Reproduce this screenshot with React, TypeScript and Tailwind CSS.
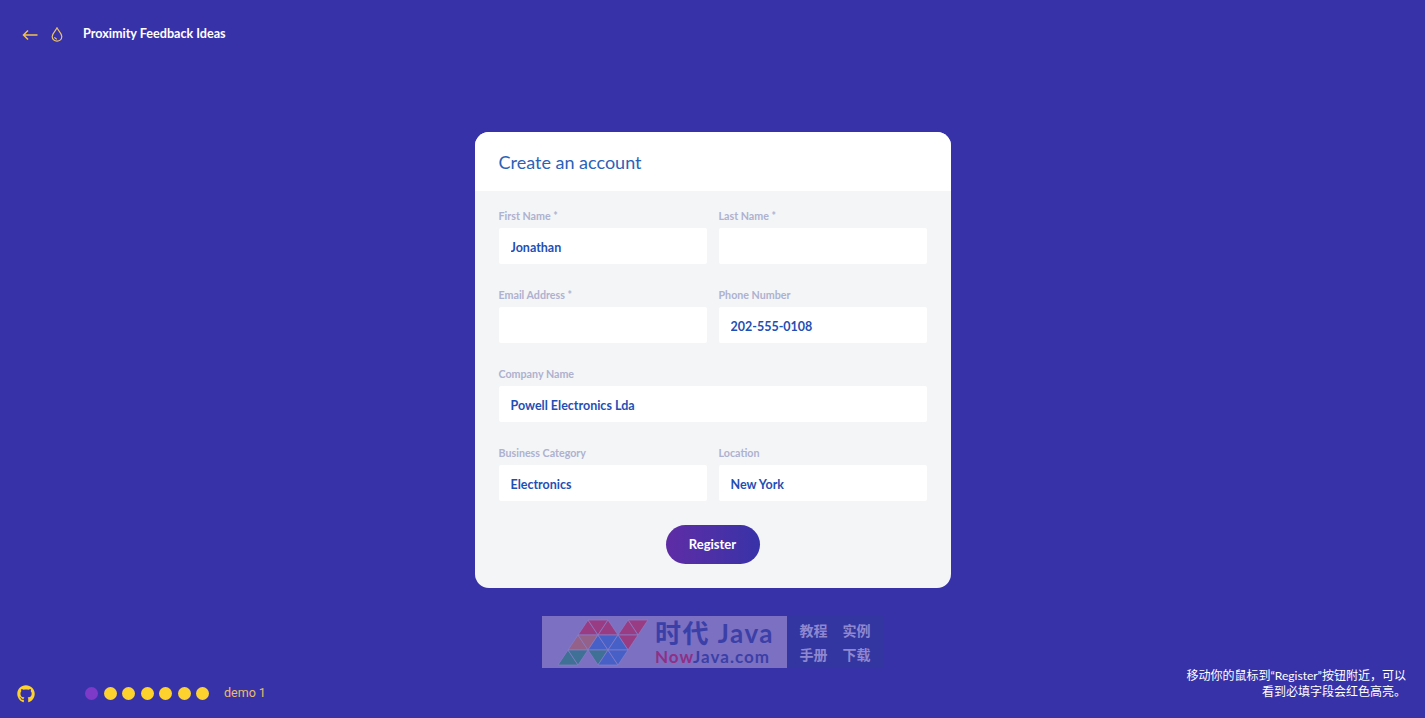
import React from "react";
import { FaGithub } from "react-icons/fa";

const FONT = "font-['Lato','Noto_Sans_CJK_SC',sans-serif]";

const MAGENTA = "#9a3c84";
const BROWN = "#93618a";
const BLUE = "#4660c8";
const TEAL = "#3f7096";

// triangles of the logo mesh: points + fill
const TRIANGLES: [string, string][] = [
  ["23,20 43,20 33,5", MAGENTA],
  ["33,5 53,5 43,20", MAGENTA],
  ["43,20 63,20 53,5", MAGENTA],
  ["73,5 93,5 83,20", MAGENTA],
  ["63,20 83,20 73,5", MAGENTA],
  ["63,20 83,20 73,35", MAGENTA],
  ["13,35 33,35 23,20", BROWN],
  ["23,20 43,20 33,35", BROWN],
  ["33,35 53,35 43,20", BLUE],
  ["43,20 63,20 53,35", BLUE],
  ["53,35 73,35 63,20", BLUE],
  ["3,50 23,50 13,35", TEAL],
  ["13,35 33,35 23,50", TEAL],
  ["33,35 53,35 43,50", TEAL],
  ["43,50 63,50 53,35", BLUE],
  ["53,35 73,35 63,50", BLUE],
];

const Field = ({ label, value, wide }: { label: string; value?: string; wide?: boolean }) => (
  <div className={wide ? "col-span-2" : ""}>
    <label className="block h-[21px] pt-[1px] text-[10.7px] leading-[16px] font-bold text-[#aeb1cf]">
      {label}
    </label>
    <input
      readOnly
      defaultValue={value}
      className="block h-[36px] w-full rounded-[2px] bg-white px-3 pt-[2px] text-[12.5px] font-bold text-[#1f4fb5] outline-none"
    />
  </div>
);

export default function App() {
  const dots = [0, 1, 2, 3, 4, 5, 6];
  return (
    <div className={`flex h-[718px] w-full flex-col overflow-hidden bg-[#3832a8] ${FONT}`}>
      <header className="flex h-[69px] items-center pl-[22px] text-white">
        <svg viewBox="0 0 16 12" className="h-[12px] w-[16px] fill-none stroke-[#f2c14e] stroke-[1.5]">
          <path d="M15.5 6H1.5M6 1.5 1.5 6 6 10.5" />
        </svg>
        <svg viewBox="0 0 12 15" className="ml-[13px] h-[15px] w-[12px] fill-none stroke-[#eec468] stroke-[1.2]">
          <path d="M6 .9C5 3.4 1.2 6 1.2 9.6 1.2 12.2 3.4 14.2 6 14.2s4.8-2 4.8-4.6C10.8 6 7 3.4 6 .9Z" />
          <path d="M3.6 10c.2 1.2 1.2 2 2.4 2.1" />
        </svg>
        <h1 className="ml-[20px] text-[12.6px] font-bold">Proximity Feedback Ideas</h1>
      </header>

      <main className="flex flex-col items-center pt-[63px]">
        <div className="w-[476px] overflow-hidden rounded-[14px] bg-[#f4f5f7]">
          <div className="flex h-[59px] items-center bg-white px-6 pt-[2px] text-[18px] text-[#2b62b8]">Create an account</div>
          <form className="px-6 pt-[16px] pb-6">
            <div className="grid grid-cols-2 gap-x-3 gap-y-[22px]">
              <Field label="First Name *" value="Jonathan" />
              <Field label="Last Name *" />
              <Field label="Email Address *" />
              <Field label="Phone Number" value="202-555-0108" />
              <Field label="Company Name" value="Powell Electronics Lda" wide />
              <Field label="Business Category" value="Electronics" />
              <Field label="Location" value="New York" />
            </div>
            <div className="mt-6 flex justify-center">
              <button
                type="button"
                className="h-[39px] w-[94px] rounded-full bg-gradient-to-r from-[#5e2ca5] to-[#3832a8] pt-[1px] text-[13px] font-bold text-white"
              >
                Register
              </button>
            </div>
          </form>
        </div>

        <div className="mt-[28px] flex h-[52px] w-[341px]">
          <div className="flex w-[245px] items-center bg-[#7c70c2] pl-[13px]">
            <svg viewBox="0 1 100 52" className="h-[52px] w-[100px] shrink-0">
              {TRIANGLES.map(([points, fill]) => (
                <polygon key={points} points={points} fill={fill} stroke="#8a80c8" strokeWidth="0.7" />
              ))}
            </svg>
            <div className="flex flex-col leading-none">
              <span className="text-[26px] leading-[29px] font-bold tracking-[1.5px] text-[#3b3fa8]">时代 Java</span>
              <span className="text-[17px] leading-[18px] font-bold tracking-[1px] text-[#3b3fa8]">
                <span className="text-[#8f2f86]">Now</span>Java.com
              </span>
            </div>
          </div>
          <div className="grid flex-1 grid-cols-2 items-center justify-items-center bg-[#3336a0] px-[5px] py-[2px] text-[14px] font-bold text-[#8f87cf]">
            <span>教程</span>
            <span>实例</span>
            <span>手册</span>
            <span>下载</span>
          </div>
        </div>
      </main>

      <footer className="mt-auto flex items-end justify-between pr-[19px] pb-[14px] pl-[17px]">
        <div className="flex items-center pb-[1px]">
          <FaGithub className="h-[18px] w-[18px] text-[#fdd22f]" />
          <div className="ml-[50px] flex gap-[5.5px]">
            {dots.map((d) => (
              <span key={d} className={`h-[13px] w-[13px] rounded-full ${d === 0 ? "bg-[#7d3ac8]" : "bg-[#fdd22f]"}`} />
            ))}
          </div>
          <span className="ml-[15px] font-['Roboto',sans-serif] text-[12.5px] text-[#e9bd6b]">demo 1</span>
        </div>
        <p className="mb-[4px] text-right text-[12px] leading-[16px] text-white">
          移动你的鼠标到“Register”按钮附近，可以
          <br />
          看到必填字段会红色高亮。
        </p>
      </footer>
    </div>
  );
}
